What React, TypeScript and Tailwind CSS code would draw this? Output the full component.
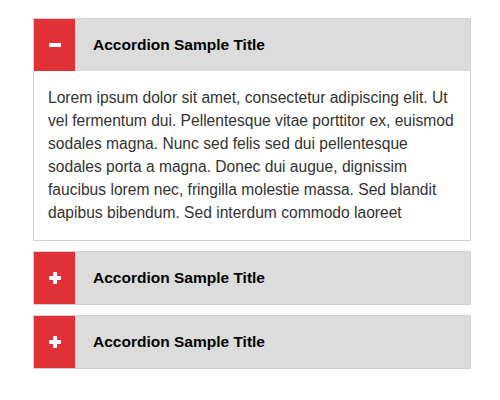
import { useState } from "react";

const body =
  "Lorem ipsum dolor sit amet, consectetur adipiscing elit. Ut vel fermentum dui. Pellentesque vitae porttitor ex, euismod sodales magna. Nunc sed felis sed dui pellentesque sodales porta a magna. Donec dui augue, dignissim faucibus lorem nec, fringilla molestie massa. Sed blandit dapibus bibendum. Sed interdum commodo laoreet";

function Icon({ open }: { open: boolean }) {
  return (
    <div className="relative w-[12px] h-[12px]">
      <div className="absolute left-0 top-[4px] w-[12px] h-[4px] bg-white rounded-[1px]" />
      {!open && <div className="absolute top-0 left-[4px] w-[4px] h-[12px] bg-white rounded-[1px]" />}
    </div>
  );
}

export default function App() {
  const [open, setOpen] = useState(0);
  return (
    <div className="w-[500px] h-[400px] bg-white pt-[18px] pl-[33px]" style={{ fontFamily: "Arial, 'Liberation Sans', sans-serif" }}>
      <div className="w-[438px] flex flex-col gap-[10px]">
        {[0, 1, 2].map((i) => (
          <div key={i} className="border border-[#d2d2d2]">
            <button
              onClick={() => setOpen(open === i ? -1 : i)}
              className="w-full flex items-center h-[52px] bg-[#dcdcdc] text-left"
            >
              <span className="w-[41px] h-full bg-[#e03236] flex items-center justify-center">
                <Icon open={open === i} />
              </span>
              <span className="pl-[18px] text-[15.5px] font-bold text-black">Accordion Sample Title</span>
            </button>
            {open === i && (
              <div className="pl-[14px] pr-[12px] pt-[15px] pb-[16px] text-[15.6px] leading-[23px] text-[#333]">
                {body}
              </div>
            )}
          </div>
        ))}
      </div>
    </div>
  );
}
